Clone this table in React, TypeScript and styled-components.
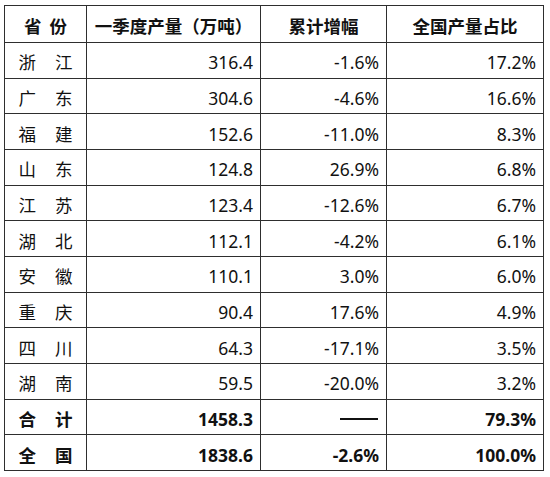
import React from 'react';
import styled, { createGlobalStyle } from 'styled-components';

interface RowData {
    name: [string, string],
    output: string,
    growth: string,
    share: string,
    bold?: boolean
}

const rows: RowData[] = [
    { name: ["浙", "江"], output: "316.4", growth: "-1.6%", share: "17.2%" },
    { name: ["广", "东"], output: "304.6", growth: "-4.6%", share: "16.6%" },
    { name: ["福", "建"], output: "152.6", growth: "-11.0%", share: "8.3%" },
    { name: ["山", "东"], output: "124.8", growth: "26.9%", share: "6.8%" },
    { name: ["江", "苏"], output: "123.4", growth: "-12.6%", share: "6.7%" },
    { name: ["湖", "北"], output: "112.1", growth: "-4.2%", share: "6.1%" },
    { name: ["安", "徽"], output: "110.1", growth: "3.0%", share: "6.0%" },
    { name: ["重", "庆"], output: "90.4", growth: "17.6%", share: "4.9%" },
    { name: ["四", "川"], output: "64.3", growth: "-17.1%", share: "3.5%" },
    { name: ["湖", "南"], output: "59.5", growth: "-20.0%", share: "3.2%" },
    { name: ["合", "计"], output: "1458.3", growth: "——", share: "79.3%", bold: true },
    { name: ["全", "国"], output: "1838.6", growth: "-2.6%", share: "100.0%", bold: true },
];

function App() {
    return (
        <>
            <GlobalStyle />
            <Table>
                <colgroup>
                    <col style={{ width: 82 }} />
                    <col style={{ width: 174 }} />
                    <col style={{ width: 126 }} />
                    <col style={{ width: 157 }} />
                </colgroup>
                <thead>
                    <tr>
                        <HeadCell>
                            <Name gap={8}><span>省</span><span>份</span></Name>
                        </HeadCell>
                        <HeadCell>一季度产量（万吨）</HeadCell>
                        <HeadCell>累计增幅</HeadCell>
                        <HeadCell>全国产量占比</HeadCell>
                    </tr>
                </thead>
                <tbody>
                    {rows.map((row, i) => (
                        <tr key={i}>
                            <NameCell bold={row.bold}>
                                <Name gap={19}><span>{row.name[0]}</span><span>{row.name[1]}</span></Name>
                            </NameCell>
                            <NumCell bold={row.bold}>{row.output}</NumCell>
                            <NumCell bold={row.bold}>
                                {row.growth === "——" ? <Dash /> : row.growth}
                            </NumCell>
                            <NumCell bold={row.bold}>{row.share}</NumCell>
                        </tr>
                    ))}
                </tbody>
            </Table>
        </>
    )
}

const GlobalStyle = createGlobalStyle`
    body {
        margin: 0;
        background: #ffffff;
        font-family: "Noto Sans", "Noto Sans CJK SC", sans-serif;
        color: #111111;
    }
`

const Table = styled.table`
    margin: 5px 0 0 4px;
    border-collapse: collapse;
    table-layout: fixed;
    width: 540px;
    font-size: 17.5px;
    line-height: 24px;

    td, th {
        border: 1px solid #2e2e2e;
        padding: 4px 7px 0 7px;
        white-space: nowrap;
        overflow: hidden;
    }
`

const HeadCell = styled.th`
    height: 37px;
    box-sizing: border-box;
    text-align: center;
    font-weight: 700;
    padding: 3px 0 0 0 !important;
`

const NameCell = styled.td<{ bold?: boolean }>`
    height: 35.67px;
    box-sizing: border-box;
    text-align: center;
    font-weight: ${p => p.bold ? 700 : 400};
    padding: 4px 0 0 0 !important;
`

const NumCell = styled.td<{ bold?: boolean }>`
    height: 35.67px;
    box-sizing: border-box;
    text-align: right;
    font-weight: ${p => p.bold ? 700 : 400};
`

const Name = styled.span<{ gap: number }>`
    display: inline-flex;
    gap: ${p => p.gap}px;
`

const Dash = styled.span`
    display: inline-block;
    width: 38px;
    height: 2px;
    background: #111111;
    vertical-align: 6px;
    margin-right: 1px;
`

export default App;
